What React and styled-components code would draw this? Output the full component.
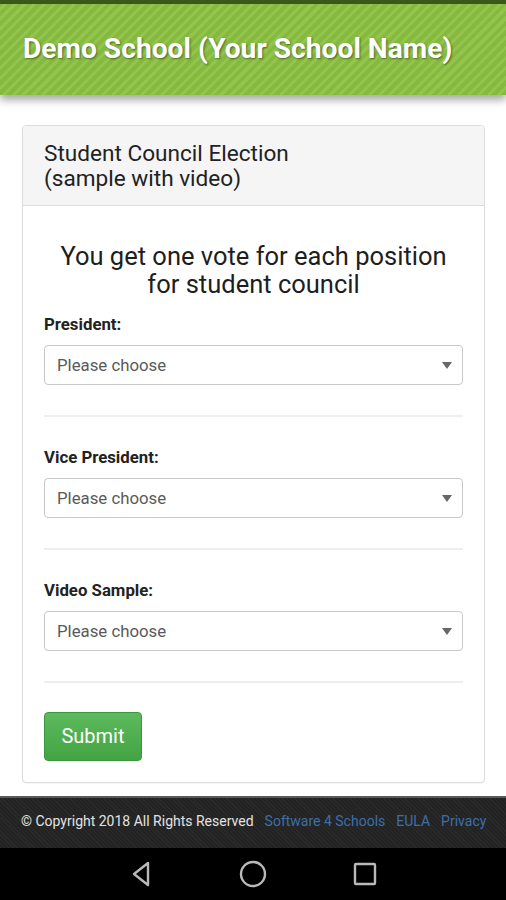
import React from 'react';
import styled, { createGlobalStyle } from 'styled-components';

const GlobalStyle = createGlobalStyle`
  html, body {
    margin: 0;
    padding: 0;
    background: #fff;
  }
  body {
    font-family: Roboto, "Liberation Sans", sans-serif;
    color: #222;
  }
  * {
    box-sizing: border-box;
  }
`;

// Page shell
const Page = styled.div`
  display: flex;
  flex-direction: column;
  width: 506px;
  min-height: 900px;
`;

const TopEdge = styled.div`
  height: 4px;
  background: #3b5a1c;
`;

// Striped green header bar
const Header = styled.header`
  position: relative;
  z-index: 1;
  display: flex;
  align-items: center;
  height: 91px;
  padding: 0 0 2px 23px;
  background: repeating-linear-gradient(
    -45deg,
    #86b93f 0px,
    #86b93f 4px,
    #93c54d 4px,
    #93c54d 7px
  );
  box-shadow: 0 5px 8px rgba(0, 0, 0, 0.35);
`;

const Title = styled.h1`
  margin: 0;
  font-size: 28.2px;
  font-weight: 700;
  color: #fff;
  text-shadow: 1px 1px 2px rgba(0, 0, 0, 0.45);
`;

const Main = styled.main`
  padding: 30px 21px 13px 22px;
`;

// Panel
const Card = styled.section`
  border: 1px solid #dcdcdc;
  border-radius: 4px;
  background: #fff;
  overflow: hidden;
  box-shadow: 0 1px 1px rgba(0, 0, 0, 0.04);
`;

const CardHeader = styled.div`
  padding: 15px 21px 14px;
  background: #f5f5f5;
  border-bottom: 1px solid #dcdcdc;
  font-size: 22.6px;
  line-height: 25px;
  color: #222;
`;

const CardBody = styled.div`
  padding: 36px 21px 21px;
`;

const Lead = styled.h2`
  margin: 0 0 16px;
  font-size: 25.5px;
  line-height: 28px;
  font-weight: 400;
  text-align: center;
  color: #1e1e1e;
`;

const Field = styled.div`
  display: flex;
  flex-direction: column;
  gap: 11px;
`;

const Label = styled.label`
  font-size: 16.8px;
  line-height: 20px;
  font-weight: 700;
  color: #222;
`;

const SelectBox = styled.div`
  display: flex;
  align-items: center;
  justify-content: space-between;
  height: 40px;
  padding: 0 10px 0 12px;
  border: 1px solid #c8c8c8;
  border-radius: 4px;
  background: #fff;
  font-size: 16.8px;
  color: #5a5a5a;
`;

const Caret = styled.span`
  width: 0;
  height: 0;
  border-left: 5px solid transparent;
  border-right: 5px solid transparent;
  border-top: 7px solid #666;
`;

const Divider = styled.hr`
  margin: 30px 0;
  border: 0;
  border-top: 2px solid #eee;
`;

const SubmitButton = styled.button`
  display: block;
  width: 98px;
  height: 49px;
  margin-top: -1px;
  padding-bottom: 3px;
  border: 1px solid #3d963d;
  border-radius: 4px;
  background: linear-gradient(#5cba5c, #43a443);
  color: #fff;
  font-family: Roboto, "Liberation Sans", sans-serif;
  font-size: 20px;
  cursor: pointer;
`;

// Dark footer strip
const Footer = styled.footer`
  display: flex;
  align-items: center;
  gap: 11px;
  height: 52px;
  padding: 0 0 4px 21px;
  border-top: 2px solid #5a5a5a;
  background-color: #232323;
  background-image: repeating-linear-gradient(
    45deg,
    rgba(255, 255, 255, 0.03) 0px,
    rgba(255, 255, 255, 0.03) 1px,
    transparent 1px,
    transparent 3px
  );
  font-size: 14px;
  white-space: nowrap;
`;

const Copy = styled.span`
  color: #e2e2e2;
`;

const FooterLink = styled.a`
  color: #3c6fa8;
  text-decoration: none;
`;

// Android navigation bar
const NavBar = styled.nav`
  display: flex;
  justify-content: center;
  align-items: center;
  gap: 82px;
  height: 52px;
  background: #000;
  margin-top: auto;
`;

const NavIcon = styled.svg`
  width: 30px;
  height: 30px;
  fill: none;
  stroke: #b9b9b9;
  stroke-width: 2.4;
`;

const fields = ['President:', 'Vice President:', 'Video Sample:'];

export default function App() {
  return (
    <Page>
      <GlobalStyle />
      <TopEdge />
      <Header>
        <Title>Demo School (Your School Name)</Title>
      </Header>
      <Main>
        <Card>
          <CardHeader>
            Student Council Election
            <br />
            (sample with video)
          </CardHeader>
          <CardBody>
            <Lead>
              You get one vote for each position
              <br />
              for student council
            </Lead>
            {fields.map((f) => (
              <React.Fragment key={f}>
                <Field>
                  <Label>{f}</Label>
                  <SelectBox>
                    Please choose
                    <Caret />
                  </SelectBox>
                </Field>
                <Divider />
              </React.Fragment>
            ))}
            <SubmitButton>Submit</SubmitButton>
          </CardBody>
        </Card>
      </Main>
      <Footer>
        <Copy>© Copyright 2018 All Rights Reserved</Copy>
        <FooterLink href="#">Software 4 Schools</FooterLink>
        <FooterLink href="#">EULA</FooterLink>
        <FooterLink href="#">Privacy</FooterLink>
      </Footer>
      <NavBar>
        <NavIcon viewBox="0 0 30 30">
          <path d="M22 4 L8 15 L22 26 Z" strokeLinejoin="round" />
        </NavIcon>
        <NavIcon viewBox="0 0 30 30">
          <circle cx="15" cy="15" r="12" />
        </NavIcon>
        <NavIcon viewBox="0 0 30 30">
          <rect x="5" y="5" width="20" height="20" rx="1" />
        </NavIcon>
      </NavBar>
    </Page>
  );
}
